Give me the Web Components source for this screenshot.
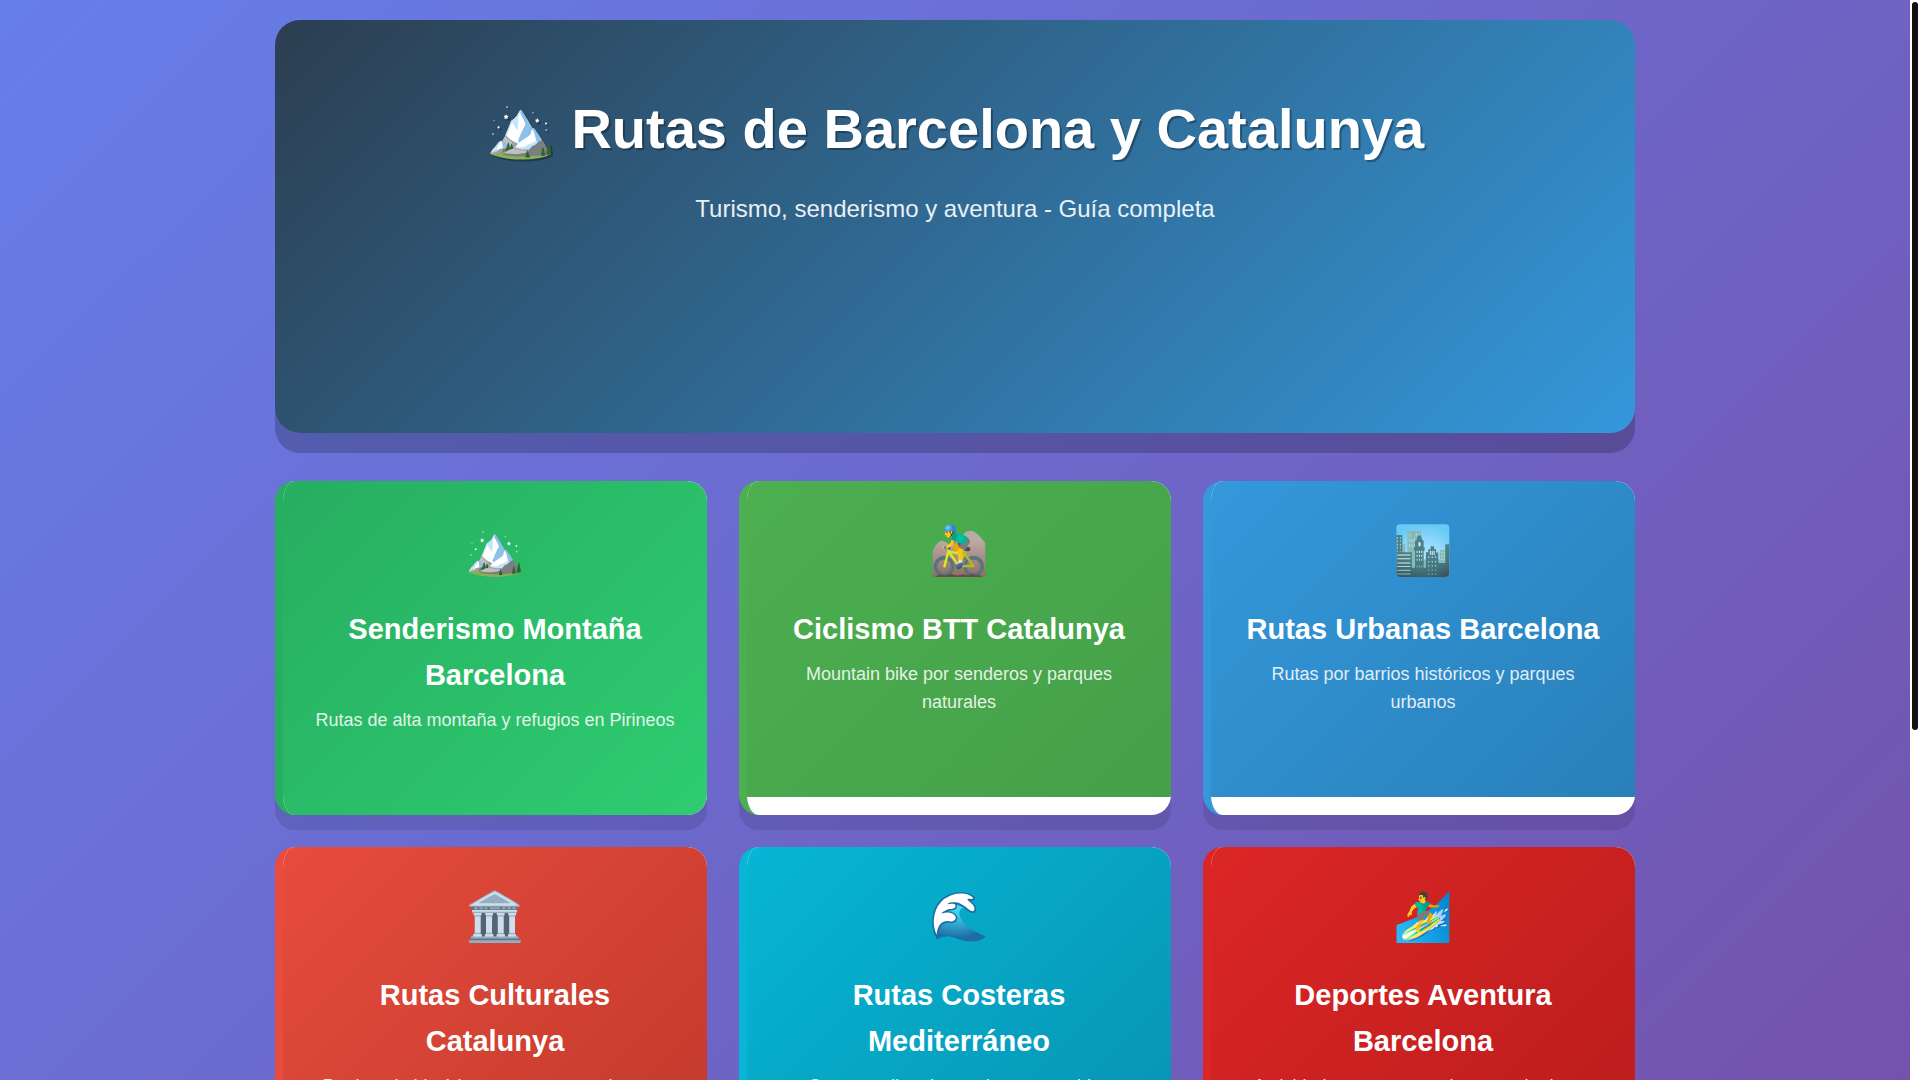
<!DOCTYPE html>
<html lang="es">
<head>
<meta charset="utf-8">
<title>Rutas de Barcelona y Catalunya</title>
<style>
html{height:100%;overflow:hidden}
body{margin:0;height:100%;overflow:hidden;font-family:"Liberation Sans",Arial,sans-serif}
</style>
</head>
<body>
<rutas-page>
  <rutas-hero heading="🏔️ Rutas de Barcelona y Catalunya">Turismo, senderismo y aventura - Guía completa</rutas-hero>
  <ruta-grid>
    <ruta-card icon="🏔️" heading="Senderismo Montaña Barcelona" from="#27ae60" to="#2ecc71">Rutas de alta montaña y refugios en Pirineos</ruta-card>
    <ruta-card icon="🚵‍♂️" heading="Ciclismo BTT Catalunya" from="#4caf50" to="#45a049">Mountain bike por senderos y parques naturales</ruta-card>
    <ruta-card icon="🏙️" heading="Rutas Urbanas Barcelona" from="#3498db" to="#2980b9">Rutas por barrios históricos y parques urbanos</ruta-card>
    <ruta-card icon="🏛️" heading="Rutas Culturales Catalunya" from="#e74c3c" to="#c0392b">Patrimonio histórico, museos y arquitectura</ruta-card>
    <ruta-card icon="🌊" heading="Rutas Costeras Mediterráneo" from="#06b6d4" to="#0891b2">Costa mediterránea, playas y pueblos</ruta-card>
    <ruta-card icon="🏄‍♂️" heading="Deportes Aventura Barcelona" from="#dc2626" to="#b91c1c">Actividades extremas y deportes de riesgo</ruta-card>
  </ruta-grid>
</rutas-page>
<script>
class RutasPage extends HTMLElement{
  constructor(){super();this.attachShadow({mode:'open'}).innerHTML=`
  <style>
  :host{display:flex;height:100%;overflow:hidden}
  .view{flex:1;min-width:0;overflow:hidden}
  .scene{min-height:148%;background:linear-gradient(135deg,#667eea 0%,#764ba2 100%)}
  main{box-sizing:border-box;max-width:1400px;margin:0 auto;padding:20px}
  .bar{box-sizing:border-box;display:grid;grid-template-rows:23fr 11fr;width:10px;padding:2px;background:#fff}
  .thumb{border-radius:3px;background:#111}
  </style>
  <div class="view"><div class="scene"><main><slot></slot></main></div></div>
  <div class="bar"><div class="thumb"></div></div>`}
}
class RutasHero extends HTMLElement{
  constructor(){super();this.attachShadow({mode:'open'}).innerHTML=`
  <style>
  :host{display:block;margin-bottom:48px;text-align:center;color:#fff}
  header{box-sizing:border-box;min-height:413px;padding:64px 40px;border-radius:25px;background:linear-gradient(135deg,#2c3e50,#3498db);box-shadow:0 20px 0 rgba(0,0,0,.2)}
  h1{margin:0 0 16px;font-size:56px;line-height:90px;text-shadow:2px 2px 0 rgba(0,0,0,.3)}
  p{margin:0;font-size:24px;line-height:38px;opacity:.9}
  </style>
  <header><h1></h1><p><slot></slot></p></header>`}
  connectedCallback(){this.shadowRoot.querySelector('h1').textContent=this.getAttribute('heading')}
}
class RutaGrid extends HTMLElement{
  constructor(){super();this.attachShadow({mode:'open'}).innerHTML=`
  <style>
  :host{display:grid;grid-template-columns:repeat(auto-fit,minmax(350px,1fr));gap:32px}
  </style><slot></slot>`}
}
class RutaCard extends HTMLElement{
  constructor(){super();this.attachShadow({mode:'open'}).innerHTML=`
  <style>
  :host{display:flex;text-align:center;color:#fff}
  article{box-sizing:border-box;width:100%;border-left:8px solid var(--from);border-radius:20px;overflow:hidden;background:#fff;box-shadow:0 15px 0 rgba(0,0,0,.1)}
  .head{box-sizing:border-box;min-height:316px;padding:35px 30px 81px;background:linear-gradient(135deg,var(--from),var(--to))}
  .icon{font-size:48px;line-height:70px;margin-bottom:20px}
  h2{margin:0 0 8px;font-size:29px;line-height:46px}
  p{margin:0;font-size:18px;line-height:28px;opacity:.85}
  </style>
  <article><div class="head"><div class="icon"></div><h2></h2><p><slot></slot></p></div></article>`}
  connectedCallback(){
    this.style.setProperty('--from',this.getAttribute('from'));
    this.style.setProperty('--to',this.getAttribute('to'));
    this.shadowRoot.querySelector('.icon').textContent=this.getAttribute('icon');
    this.shadowRoot.querySelector('h2').textContent=this.getAttribute('heading');
  }
}
customElements.define('rutas-page',RutasPage);
customElements.define('rutas-hero',RutasHero);
customElements.define('ruta-grid',RutaGrid);
customElements.define('ruta-card',RutaCard);
</script>
</body>
</html>
